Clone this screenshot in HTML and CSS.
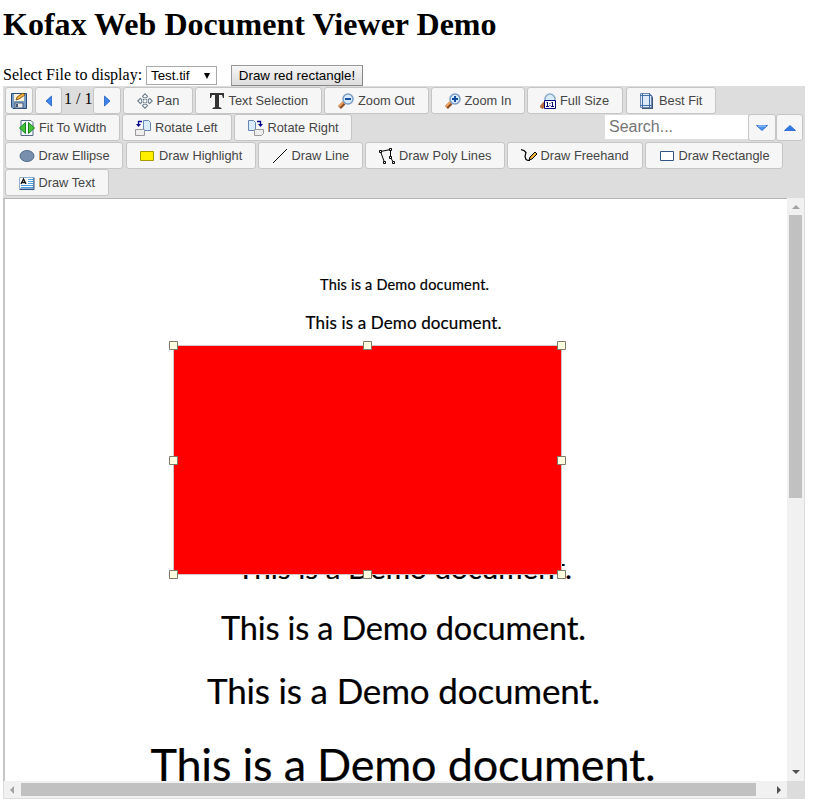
FILE: index.html
```html
<!DOCTYPE html>
<html lang="en">
<head>
<meta charset="utf-8">
<title>Kofax Web Document Viewer Demo</title>
<link rel="stylesheet" href="styles.css">
</head>
<body>
<h1>Kofax Web Document Viewer Demo</h1>
<div class="file-row">
  <span class="file-label">Select File to display:</span>
  <div class="select"><span>Test.tif</span><svg width="6" height="6"><path d="M0 0h6L3 6z"/></svg></div>
  <button class="draw-red">Draw red rectangle!</button>
</div>
<main class="viewer">
  <div class="toolbar">
    <div class="row first">
      <button class="btn icon-only" style="width:28px"><svg width="16" height="16"><path d="M.5.500h15v15H2L.5 14z" fill="#789bc4" stroke="#294d7b"/><path d="M3 1h10v7H3z" fill="#fff4d8"/><path d="M4 10h8v5H4z" fill="#e8e8e8" stroke="#4b6079"/><path d="M5 11h2v3H5z" fill="#405674"/><path d="M5 7l1-3 6-4 2 2-6 4z" fill="#f5ad36" stroke="#6d4b1b" stroke-width=".8"/></svg></button>
      <button class="btn icon-only" style="width:27px"><svg width="16" height="16"><path d="M10.500 3v10L5 8z" fill="#3d85ed" stroke="#1554b8" stroke-width=".7"/></svg></button>
      <span class="page-num">1 / 1</span>
      <button class="btn icon-only" style="width:28px"><svg width="16" height="16"><path d="M5.500 3v10L11 8z" fill="#3d85ed" stroke="#1554b8" stroke-width=".7"/></svg></button>
      <button class="btn" style="width:70px"><svg width="16" height="16" fill="#fff" stroke="#6d8091" stroke-width="1.100"><path d="M8 .8l2.500 2.500-1 1.400h-3l-1-1.400zM8 15.200l2.500-2.500-1-1.400h-3l-1 1.400zM.8 8l2.500-2.500 1.400 1v3l-1.400 1zM15.200 8l-2.500-2.500-1.400 1v3l1.400 1z"/><path d="M6.500 7.500v-1h1M8.500 6.500h1v1M9.500 8.500v1h-1M7.500 9.500h-1v-1" fill="none"/></svg><span style="width:23px">Pan</span></button>
      <button class="btn" style="width:127px"><svg width="16" height="16"><path d="M1 0h14v5h-1l-1-3H10v12l2.500 1v1h-9v-1L6 14V2H3L2 5H1z" fill="#333"/></svg><span style="width:80px">Text Selection</span></button>
      <button class="btn" style="width:105px"><svg width="16" height="16"><path d="M1.500 14.500L6 10" stroke="#8b4d24" stroke-width="4"/><path d="M1 13.500L5.500 9" stroke="#f0a15d" stroke-width="2"/><circle cx="10" cy="6" r="5" fill="#d8ebff" stroke="#7b9bc4" stroke-width="1.500"/><path d="M7 6h6" stroke="#164ba0" stroke-width="2"/></svg><span style="width:57px">Zoom Out</span></button>
      <button class="btn" style="width:94px"><svg width="16" height="16"><path d="M1.500 14.500L6 10" stroke="#8b4d24" stroke-width="4"/><path d="M1 13.500L5.500 9" stroke="#f0a15d" stroke-width="2"/><circle cx="10" cy="6" r="5" fill="#d8ebff" stroke="#7b9bc4" stroke-width="1.500"/><path d="M7 6h6M10 3v6" stroke="#164ba0" stroke-width="2"/></svg><span style="width:47px">Zoom In</span></button>
      <button class="btn" style="width:96px"><svg width="16" height="16"><path d="M1 15l4-5" stroke="#b56c3a" stroke-width="4"/><circle cx="10" cy="6" r="5" fill="#d8ebff" stroke="#8babc9" stroke-width="1.500"/><path d="M4.500 7.500h11v8h-11z" fill="#fff" stroke="#00007c"/><path d="M6 10l1-1h1v4h1v1H6v-1h1v-3zM11 10l1-1h1v4h1v1h-3v-1h1v-3zM9.500 10h1v1h-1zM9.500 12h1v1h-1z" fill="#00007c"/></svg><span style="width:50px">Full Size</span></button>
      <button class="btn" style="width:90px;margin-left:1px"><svg width="16" height="16"><path d="M3 1h8l3 3v12H3z" fill="#405777"/><path d="M1.500.500h9l2 2v12h-11z" fill="#dfeaf9" stroke="#7088ab"/><path d="M3.500 0v15M10.500 0v15M1 2.500h12M1 12.500h12" stroke="#426fa9"/></svg><span style="width:44px">Best Fit</span></button>
    </div>
    <div class="row second">
      <button class="btn" style="width:115px"><svg width="16" height="16"><path d="M2 .5h10l2 2v13H2z" fill="#f4f8ff" stroke="#536987"/><path d="M6.500 2.500v11L.5 8zM9.500 2.500v11L15.500 8z" fill="#45c33c" stroke="#16841b"/></svg><span style="width:67px">Fit To Width</span></button>
      <button class="btn" style="width:110px"><svg width="16" height="16"><path d="M8.500.5h5l2 2v8h-7z" fill="#dcecff" stroke="#6386b4"/><path d="M.5 9.500h9v6h-9z" fill="#eee" stroke="#999"/><path d="M7 1.500H3.500V5" fill="none" stroke="#00008b" stroke-width="1.300"/><path d="M1 4h5L3.500 7z" fill="#00008b"/></svg><span style="width:64px">Rotate Left</span></button>
      <button class="btn" style="width:118px"><svg width="16" height="16"><path d="M.5.5h5l2 2v8h-7z" fill="#dcecff" stroke="#6386b4"/><path d="M6.500 9.500h9v4l-2 2h-7z" fill="#eee" stroke="#999"/><path d="M9 1.500h3.500V5" fill="none" stroke="#00008b" stroke-width="1.300"/><path d="M10 4h5l-2.500 3z" fill="#00008b"/></svg><span style="width:71px">Rotate Right</span></button>
      <div class="search-area"><div class="search">Search...</div><button class="btn icon-only" style="width:28px"><svg width="16" height="16"><path d="M2.500 5.500h11L8 10.500z" fill="#4a91f0" stroke="#2261ca" stroke-width=".8"/><path d="M4 6h8" stroke="#b3d4ff"/></svg></button><button class="btn icon-only" style="width:27px"><svg width="16" height="16"><path d="M2.500 10.500h11L8 5.500z" fill="#317be8" stroke="#2261ca" stroke-width=".8"/></svg></button></div>
    </div>
    <div class="row third">
      <button class="btn" style="width:118px"><svg width="16" height="16"><ellipse cx="8" cy="8" rx="7" ry="5.500" fill="#7890ad" stroke="#526d8d"/></svg><span style="width:71px">Draw Ellipse</span></button>
      <button class="btn" style="width:130px;margin-left:1px"><svg width="16" height="16"><path d="M1.500 3.500h13v9h-13z" fill="#fff000" stroke="#a59b00"/></svg><span style="width:84px">Draw Highlight</span></button>
      <button class="btn" style="width:105px"><svg width="16" height="16"><path d="M1 15L15 1" stroke="#000"/></svg><span style="width:58px">Draw Line</span></button>
      <button class="btn" style="width:140px"><svg width="16" height="16" fill="#fff" stroke="#000"><path d="M5.500 14.500l-4-11 10-2v8l3 5" fill="none"/><path d="M.5 2.500h2v2h-2zM10.500.5h2v2h-2zM10.500 8.500h2v2h-2zM4.500 13.500h2v2h-2zM13.500 13.500h2v2h-2z"/></svg><span style="width:92px">Draw Poly Lines</span></button>
      <button class="btn" style="width:136px"><svg width="16" height="16"><path d="M0 1.500l3 1 2 2-1 4 1 3 2 1h2" fill="none" stroke="#000" stroke-width="1.200"/><path d="M8 12l1-3 5-5 2 2-5 5z" fill="#e9b23c" stroke="#000"/></svg><span style="width:89px">Draw Freehand</span></button>
      <button class="btn" style="width:138px"><svg width="16" height="16"><path d="M1.500 3.500h13v9h-13z" fill="#fff" stroke="#315482"/></svg><span style="width:91px">Draw Rectangle</span></button>
    </div>
    <div class="row">
      <button class="btn" style="width:104px"><svg width="16" height="16"><path d="M.5 2.500h14v11H.5z" fill="#fff" stroke="#8fb0d0"/><path d="M9 4.500h5M9 6.500h5M9 8.500h5M2 10.500h12M2 12.500h12" stroke="#4d9ddc"/><path d="M.5 14.500h14.500v-12" fill="none" stroke="#315482"/><path d="M2 9l2.500-5L7 9M3 7.500h3" stroke="#111" fill="none" stroke-width="1.300"/></svg><span style="width:57px">Draw Text</span></button>
    </div>
  </div>
  <div class="document">
    <div class="page">
      <svg class="content" width="782" height="582" viewBox="5 199 782 582">
        <text x="320" y="290" font-size="14.500" textLength="169">This is a Demo document.</text>
        <text x="305.500" y="329" font-size="17" textLength="196">This is a Demo document.</text>
        <text x="237" y="578.500" font-size="29.500" textLength="335">This is a Demo document.</text>
        <text x="221" y="640" font-size="32.500" textLength="365">This is a Demo document.</text>
        <text x="207" y="704" font-size="35" textLength="393">This is a Demo document.</text>
        <text x="150.500" y="780.500" font-size="45" textLength="505">This is a Demo document.</text>
        <path d="M173.500 345.500h388v229h-388z" fill="#f00" stroke="#d4c4c4"/>
        <g fill="#ffffe1" stroke="#7c7c68"><path d="M169.500 341.500h8v8h-8zM363.500 341.500h8v8h-8zM557.500 341.500h8v8h-8zM169.500 456.500h8v8h-8zM557.500 456.500h8v8h-8zM169.500 570.500h8v8h-8zM363.500 570.500h8v8h-8zM557.500 570.500h8v8h-8z"/></g>
      </svg>
    </div>
    <div class="vscroll"><svg width="17" height="17"><path d="M5 11h8L9 7z" fill="#a3a3a3"/></svg><div class="vthumb"></div><svg width="17" height="17"><path d="M5 6h8L9 10z" fill="#505050"/></svg></div>
    <div class="hscroll"><svg width="17" height="17"><path d="M10 5v8L6 9z" fill="#a3a3a3"/></svg><div class="hthumb"></div><svg width="17" height="17"><path d="M7 5v8l4-4z" fill="#505050"/></svg></div>
    <div class="corner"></div>
  </div>
</main>
</body>
</html>
```
FILE: styles.css
```css
* { box-sizing: border-box; }
body { margin: 0; padding: 5px 0 0 3px; height: 805px; overflow: hidden; background: #fff; color: #000; font: 16px "Liberation Serif", serif; }
svg { display: block; flex-shrink: 0; }
h1 { margin: 0; height: 60px; padding-top: 1px; font-size: 32px; line-height: 37px; font-weight: bold; letter-spacing: .02px; }
.file-row { height: 21px; display: flex; align-items: center; }
.file-label { width: 140px; margin-right: 3px; padding-bottom: 1px; white-space: nowrap; }
.select { width: 71px; height: 19px; padding: 0 6px 0 4px; border: 1px solid #a9a9a9; display: flex; align-items: center; justify-content: space-between; font: 13.333px "Liberation Sans", sans-serif; }
.draw-red { margin: 0 0 0 14px; width: 132px; height: 21px; padding: 0; border: 1px solid #999; border-right-color: #888; border-bottom-color: #888; background: linear-gradient(#f6f6f6, #ddd); font: 13.333px "Liberation Sans", sans-serif; white-space: nowrap; }
.viewer { width: 802px; height: 713px; background: #ddd; }
.toolbar { height: 112px; padding: 1px 2px 0; }
.row { display: flex; gap: 2px; height: 27px; }
.row.first { height: 27px; }
.row.second { height: 28px; }
.btn { height: 27px; margin: 0; padding: 0; border: 1px solid #c5c5c5; border-radius: 3px; background: #f6f6f6; color: #454545; display: flex; align-items: center; justify-content: center; gap: 4px; font: 12.8px "Liberation Sans", sans-serif; white-space: nowrap; flex-shrink: 0; }
.btn span { text-align: left; }
.page-num { width: 27px; height: 26px; line-height: 24px; white-space: nowrap; }
.search-area { margin-left: auto; display: flex; }
.search { width: 143px; height: 24px; margin-top: 1px; padding-left: 4px; background: #fff; color: #757575; font: 16px/23px "Liberation Sans", sans-serif; }
.document { height: 601px; display: grid; grid-template-columns: 784px 17px; grid-template-rows: 583px 17px; border-right: 1px solid #ddd; }
.page { border-top: 1px solid #b5b5b5; border-left: 2px solid #c5c5c5; background: #fff; overflow: hidden; }
.content { font-family: Lato, sans-serif; fill: #000; }
.content text { stroke: #000; stroke-width: .2px; }
.vscroll { background: #f1f1f1; display: flex; flex-direction: column; }
.vthumb { width: 13px; height: 283px; margin-left: 2px; margin-bottom: auto; background: #c1c1c1; }
.hscroll { background: #f1f1f1; margin-left: 1px; display: flex; }
.hthumb { width: 735px; height: 13px; margin: 2px auto 0 0; background: #c1c1c1; }
.corner { background: #dcdcdc; }
```
